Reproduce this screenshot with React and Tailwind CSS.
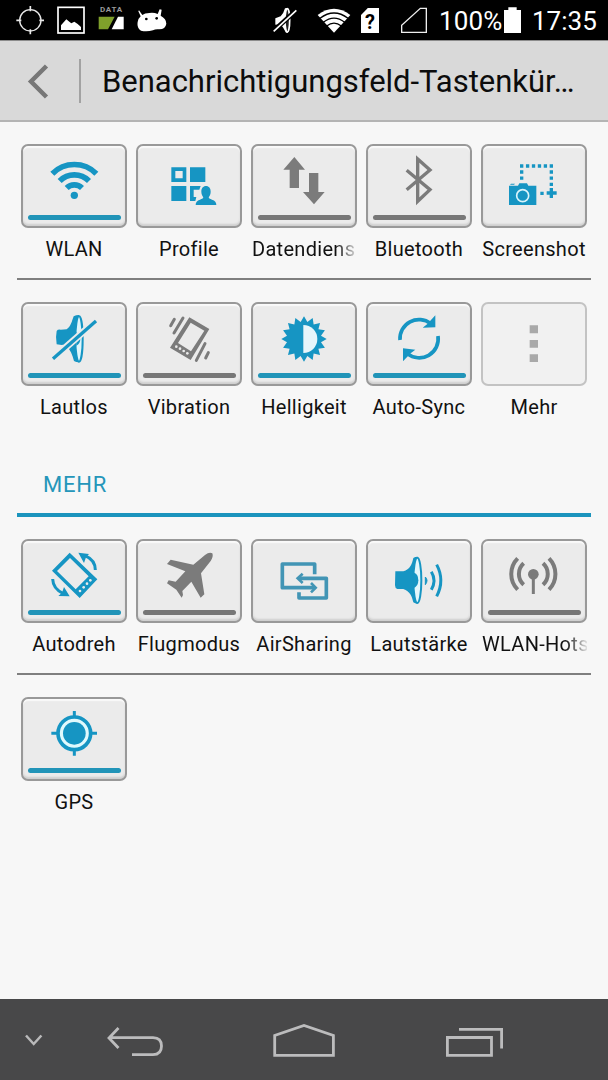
import clsx from 'clsx'

const BLUE = '#1695c3'
const GRAY = '#7b7b7b'
const FACE = '#ebebeb'

const sunPoints = Array.from({ length: 32 }, (_, i) => {
  const r = i % 2 === 0 ? 68 : 52
  const a = (i * Math.PI) / 16
  return `${(159 + r * Math.sin(a)).toFixed(1)},${(111 - r * Math.cos(a)).toFixed(1)}`
}).join(' ')

// Tile icons share one canvas, three units per pixel, measured from the tile's corner
const ICONS = {
  wlan: (
    <>
      <g fill="none" stroke={BLUE} strokeWidth="17">
        <path d="M94 89A93 93 0 0 1 226 89" />
        <path d="M116 111A62 62 0 0 1 204 111" />
        <path d="M137 132A33 33 0 0 1 183 132" />
      </g>
      <circle cx="160" cy="154" r="11" fill={BLUE} />
    </>
  ),
  profile: (
    <g fill={BLUE}>
      <path fillRule="evenodd" d="M106 70h45v44h-45zM118 81v22h22v-22z" />
      <path d="M162 70h46v44h-46zM106 126h45v45h-45z" />
      <path d="M162 126h32l-4 11h-17v22h8l-3 12h-16z" />
      <path d="M210 126c9 0 14 7 14 17 0 8-3 13-6 17 1 4 4 5 10 7 9 3 13 7 13 16h-62c0-9 4-13 13-16 6-2 9-3 10-7-3-4-6-9-6-17 0-10 5-17 14-17z" />
    </g>
  ),
  data: (
    <g fill={GRAY}>
      <path d="M130 39l32 38h-18v55h-28v-55h-19z" />
      <path d="M174 87h28v57h19l-32 37-33-37h18z" />
    </g>
  ),
  bluetooth: (
    <path d="M122 79L192 137L155 172V45L192 78L122 137" fill="none" stroke={GRAY} strokeWidth="10" />
  ),
  screenshot: (
    <>
      <g fill="none" stroke={BLUE} strokeWidth="10">
        <path d="M117 66H217" strokeDasharray="10 7.8" />
        <path d="M122 79V108" strokeDasharray="10 8.5" />
        <path d="M211 79V127" strokeDasharray="10 8.5" />
        <path d="M178 148H188M197 147H227M211 132V162" />
      </g>
      <path d="M84 125h27l4-7h23l4 7h24v58H84zM87 122l3-3h12l-3 3z" fill={BLUE} />
      <circle cx="125" cy="155" r="18" fill="none" stroke="#d9f4fb" strokeWidth="5" />
    </>
  ),
  mute: (
    <>
      <path
        d="M107 127Q103 106 107 87Q110 82 119 83L137 82C150 73 152 59 158 43Q165 39 174 39V181Q165 181 159 177C154 158 148 144 137 133Q130 127 122 129Z"
        fill={BLUE}
      />
      <ellipse cx="174" cy="111" rx="11" ry="68" fill="#dff6fc" stroke={BLUE} strokeWidth="6" />
      <path d="M166 91q12 6 12 20t-12 20z" fill={BLUE} />
      <path d="M93 172L229 53" stroke={FACE} strokeWidth="21" />
      <path d="M96 170L225 57" stroke={BLUE} strokeWidth="10" />
    </>
  ),
  vibration: (
    <>
      <path
        fillRule="evenodd"
        d="M160 46L220 81L164 174L102 137ZM164 62L126 123L165 148L205 86Z"
        fill={GRAY}
      />
      <g fill={FACE}>
        <circle cx="121" cy="134" r="4" />
        <circle cx="132" cy="140" r="4" />
        <circle cx="143" cy="147" r="4" />
        <circle cx="154" cy="154" r="4" />
      </g>
      <path
        d="M115 52L104 71M141 48L114 93M207 125L181 175M217 152L209 168"
        stroke={GRAY}
        strokeWidth="9"
        strokeLinecap="round"
      />
    </>
  ),
  brightness: (
    <>
      <polygon points={sunPoints} fill={BLUE} />
      <path d="M157 69a42 42 0 0 1 0 84z" fill="#e6f5fa" />
    </>
  ),
  sync: (
    <>
      <g fill="none" stroke={BLUE} strokeWidth="11">
        <path d="M102 114A57 57 0 0 1 194 65" />
        <path d="M216 102A57 57 0 0 1 124 155" />
      </g>
      <path d="M208 40V76L170 77L184 66ZM111 178V139L148 143L134 154Z" fill={BLUE} />
    </>
  ),
  more: <path d="M146 70h25v24h-25zM146 114h25v23h-25zM146 157h25v23h-25z" fill="#a9a9a9" />,
  rotate: (
    <>
      <path
        fillRule="evenodd"
        d="M146 41L229 121L176 177L93 95ZM147 57L108 96L164 151L203 112Z"
        fill={BLUE}
      />
      <g fill={FACE}>
        <circle cx="177" cy="156" r="4" />
        <circle cx="188" cy="145" r="4" />
        <circle cx="198" cy="134" r="4" />
        <circle cx="208" cy="124" r="4" />
      </g>
      <g fill="none" stroke={BLUE} strokeWidth="9">
        <path d="M223 93Q223 63 192 50" />
        <path d="M95 120Q96 149 126 163" />
      </g>
      <path d="M172 41L204 45L195 55L189 72ZM146 172L112 171L123 161L129 144Z" fill={BLUE} />
    </>
  ),
  plane: (
    <path
      d="M207 48Q220 38 229 43Q233 53 224 66L195 103L205 166L194 176L166 128L139 156L141 168L137 176L121 152L93 133L98 124L119 128L148 97L93 75L104 62L172 77Z"
      fill={GRAY}
    />
  ),
  sharing: (
    <g fill="none" stroke="#4295b5" strokeLinejoin="round">
      <g strokeWidth="11">
        <path d="M191 106V75H94V146H192" />
        <path d="M144 160V177H226V118H142" />
      </g>
      <path d="M180 132L194 146L180 160M155 104L140 118L155 132" strokeWidth="8" strokeLinejoin="miter" />
    </g>
  ),
  volume: (
    <>
      <path
        d="M88 97H112C132 91 138 76 142 57Q147 53 154 53V194Q147 194 142 190C138 172 132 157 112 150H94Q87 148 87 139Z"
        fill={BLUE}
      />
      <ellipse cx="154" cy="124" rx="12" ry="68" fill="#e3f7fc" stroke={BLUE} strokeWidth="6" />
      <path d="M142 100q15 5 15 24t-15 24z" fill={BLUE} />
      <path d="M178 114q10 10 0 23z" fill={BLUE} stroke={BLUE} strokeWidth="3" />
      <path d="M196 98Q212 124 196 152M212 77Q237 124 212 172" fill="none" stroke={BLUE} strokeWidth="9" />
    </>
  ),
  hotspot: (
    <>
      <circle cx="157" cy="106" r="16" fill={GRAY} />
      <path d="M157 106V165" stroke={GRAY} strokeWidth="9" />
      <g fill="none" stroke={GRAY} strokeWidth="12">
        <path d="M128 73A43 43 0 0 0 128 137" />
        <path d="M110 58A67 67 0 0 0 110 152" />
        <path d="M186 73A43 43 0 0 1 186 137" />
        <path d="M204 58A67 67 0 0 1 204 152" />
      </g>
    </>
  ),
  gps: (
    <>
      <circle cx="160" cy="109" r="49" fill="#e0f9fd" stroke={BLUE} strokeWidth="11" />
      <circle cx="160" cy="109" r="34" fill={BLUE} />
      <path d="M160 42V58M160 160V176M91 109H108M212 109H228" stroke={BLUE} strokeWidth="9" />
    </>
  ),
}

const ROWS = [
  [
    { icon: 'wlan', label: 'WLAN', bar: 'on' },
    { icon: 'profile', label: 'Profile' },
    { icon: 'data', label: 'Datendiens', bar: 'off', fade: true },
    { icon: 'bluetooth', label: 'Bluetooth', bar: 'off' },
    { icon: 'screenshot', label: 'Screenshot' },
  ],
  [
    { icon: 'mute', label: 'Lautlos', bar: 'on' },
    { icon: 'vibration', label: 'Vibration', bar: 'off' },
    { icon: 'brightness', label: 'Helligkeit', bar: 'on' },
    { icon: 'sync', label: 'Auto-Sync', bar: 'on' },
    { icon: 'more', label: 'Mehr', disabled: true },
  ],
]

const MORE_ROWS = [
  [
    { icon: 'rotate', label: 'Autodreh', bar: 'on' },
    { icon: 'plane', label: 'Flugmodus', bar: 'off' },
    { icon: 'sharing', label: 'AirSharing' },
    { icon: 'volume', label: 'Lautstärke' },
    { icon: 'hotspot', label: 'WLAN-Hots', bar: 'off', fade: true },
  ],
  [{ icon: 'gps', label: 'GPS', bar: 'on' }],
]

function Tile({ icon, label, bar, fade, disabled }) {
  return (
    <div className="w-[106px]">
      <button
        className={clsx(
          'flex flex-col items-center justify-start w-full h-[84px] rounded-[7px] border-2',
          disabled
            ? 'border-[#c3c3c3] bg-[#f1f1f1]'
            : 'border-[#999] bg-[#ebebeb] shadow-[inset_0_2px_1px_#fafafa,inset_0_-2px_2px_#cfcfcf]'
        )}
      >
        <svg className="w-[102px] h-[69px]" viewBox="6 6 306 207">
          {ICONS[icon]}
        </svg>
        {bar && (
          <span
            className={clsx(
              'w-[93px] h-[5px] rounded-full',
              bar === 'on' ? 'bg-[#2194b8]' : 'bg-[#777]'
            )}
          />
        )}
      </button>
      <div
        className={clsx(
          'mt-[9px] h-6 text-[20px] leading-6 tracking-[0.3px] text-[#111] whitespace-nowrap',
          fade
            ? 'pl-px [mask-image:linear-gradient(to_right,#000_80%,transparent_102%)]'
            : 'flex justify-center'
        )}
      >
        {label}
      </div>
    </div>
  )
}

function TileRows({ rows }) {
  return rows.map((row, i) => (
    <div key={i}>
      {i > 0 && <div className="h-[2px] mt-[17px] mb-[22px] bg-[#7f7f7f]" />}
      <div className="flex gap-[9px] px-1">
        {row.map(t => <Tile key={t.label} {...t} />)}
      </div>
    </div>
  ))
}

function StatusBar() {
  return (
    <div className="h-10 flex items-start bg-black text-white shrink-0">
      <svg className="w-7 h-10 ml-4" viewBox="48 0 84 120" fill="none" stroke="#e8e8e8" strokeWidth="4">
        <circle cx="91" cy="61" r="32" />
        <path d="M91 18V34M91 88V103M49 61H64M118 61H132" strokeWidth="5" />
      </svg>
      <svg className="w-7 h-10 ml-[13px]" viewBox="171 0 84 120">
        <rect x="174" y="22" width="78" height="77" fill="none" stroke="#fff" strokeWidth="5" />
        <path d="M183 90V76L199 58L208 65L214 70L223 65L233 72L243 81V90Z" fill="#fff" />
      </svg>
      <div className="w-[26px] ml-[13px] pt-[6px]">
        <div className="text-[8px] leading-[8px] font-bold tracking-[0.8px] text-center text-[#999] pl-px">DATA</div>
        <svg className="block w-[26px] h-[14px] mt-[2px]" viewBox="295 48 78 42">
          <path d="M297 50H345L325 88H297Z" fill="#7fa02b" />
          <path d="M355 50H372V88H336Z" fill="#fff" />
        </svg>
      </div>
      <svg className="w-[30px] h-10 ml-[13px]" viewBox="411 0 90 120">
        <path
          d="M417 31L427 45Q434 39 448 39Q462 37 473 42L479 28L485 29L482 47Q499 56 499 71Q496 89 476 88Q466 87 459 91Q440 96 423 92Q410 84 413 66Q415 55 422 49L415 34Z"
          fill="#fff"
        />
        <circle cx="439" cy="57" r="4" fill="#000" />
        <circle cx="470" cy="55" r="4" fill="#000" />
      </svg>
      <svg className="w-6 h-10 ml-[106px]" viewBox="820 0 72 120">
        <path d="M827 55L843 49Q852 40 856 25L865 24V98H859Q852 84 843 73L827 74Z" fill="#fff" />
        <ellipse cx="863" cy="61" rx="7" ry="35" fill="#222" stroke="#fff" strokeWidth="5" />
        <path d="M818 96L893 28" stroke="#000" strokeWidth="14" />
        <path d="M822 94L890 31" stroke="#fff" strokeWidth="5" />
      </svg>
      <svg className="w-[34px] h-10 ml-[20px]" viewBox="41 0 102 120">
        <path d="M92 98L43 45Q92 8 141 45Z" fill="#fff" />
        <g fill="none" stroke="#000" strokeWidth="4">
          <path d="M50 55Q92 23 134 55" />
          <path d="M60 67Q92 42 124 67" />
          <path d="M70 78Q92 61 114 78" />
        </g>
      </svg>
      <div className="w-[18px] h-[25px] ml-[10px] mt-2 bg-white text-black text-[20px] leading-[28px] font-bold text-center [clip-path:polygon(38%_0,100%_0,100%_100%,0_100%,0_28%)]">
        ?
      </div>
      <svg className="w-[26px] h-10 ml-[22px]" viewBox="293 0 78 120">
        <path d="M295 97V76L351 25H369V97Z" fill="none" stroke="#eee" strokeWidth="4" />
      </svg>
      <div className="w-[65px] ml-3 text-[26px] leading-[42px] tracking-[0.1px] whitespace-nowrap">100%</div>
      <svg className="w-[17px] h-10" viewBox="602 0 51 120">
        <path d="M602 30H615V22H640V30H653V99H602Z" fill="#fff" />
      </svg>
      <div className="ml-[11px] text-[26px] leading-[42px] whitespace-nowrap">17:35</div>
    </div>
  )
}

function Header() {
  return (
    <div className="h-[82px] flex items-center bg-[#d9d9d9] border-t border-t-[#8c8c8c] border-b-2 border-b-[#b4b4b4] shrink-0">
      <svg className="w-6 h-10 ml-[26px]" viewBox="26 61 24 40">
        <path d="M46.500 66L31 81.500L46.500 97" fill="none" stroke="#777" strokeWidth="4.500" />
      </svg>
      <div className="w-[2px] h-11 ml-[29px] bg-[#a2a2a2]" />
      <h1 className="ml-[21px] pt-[3px] text-[31px] leading-10 tracking-[-0.02px] text-[#0c0c0c] whitespace-nowrap">
        Benachrichtigungsfeld-Tastenkür…
      </h1>
    </div>
  )
}

function NavBar() {
  return (
    <div className="h-[81px] flex bg-[#484849] shrink-0">
      <svg className="w-5 h-[81px] ml-6" viewBox="24 999 20 81" fill="none" stroke="#b9b9ba" strokeWidth="2.5">
        <path d="M26 1035.500L33.700 1044L41.400 1035.500" />
      </svg>
      <svg className="w-[60px] h-[81px] ml-[61px]" viewBox="105 999 60 81" fill="none" stroke="#bcbcbd" strokeWidth="2.800">
        <path d="M118.500 1028L109 1038L118.500 1048M110 1037.700H153Q161.500 1038 161.500 1046Q161.500 1054.500 153 1054.700H132" />
      </svg>
      <svg className="w-16 h-[81px] ml-[107px]" viewBox="272 999 64 81" fill="none" stroke="#bcbcbd" strokeWidth="2.800">
        <path d="M274.700 1055.300V1035.500L304 1025.500L333.400 1035.500V1055.300Z" />
      </svg>
      <svg className="w-[60px] h-[81px] ml-[109px]" viewBox="445 999 60 81" fill="none" stroke="#bcbcbd" strokeWidth="2.800">
        <path d="M447.400 1037.500H491.500V1055.300H447.400ZM459 1029.300H501.600V1048.500" />
      </svg>
    </div>
  )
}

export default function App() {
  return (
    <div className="w-[608px] h-[1080px] flex flex-col overflow-hidden bg-[#f7f7f7] font-['Roboto',sans-serif]">
      <StatusBar />
      <Header />
      <main className="flex-1 px-[17px] pt-[22px]">
        <TileRows rows={ROWS} />
        <h2 className="mt-[52px] pl-[26px] text-[22px] leading-7 tracking-[0.8px] text-[#2596ba]">MEHR</h2>
        <div className="h-1 mt-[14px] mb-[22px] bg-[#1b94bd]" />
        <TileRows rows={MORE_ROWS} />
      </main>
      <NavBar />
    </div>
  )
}
